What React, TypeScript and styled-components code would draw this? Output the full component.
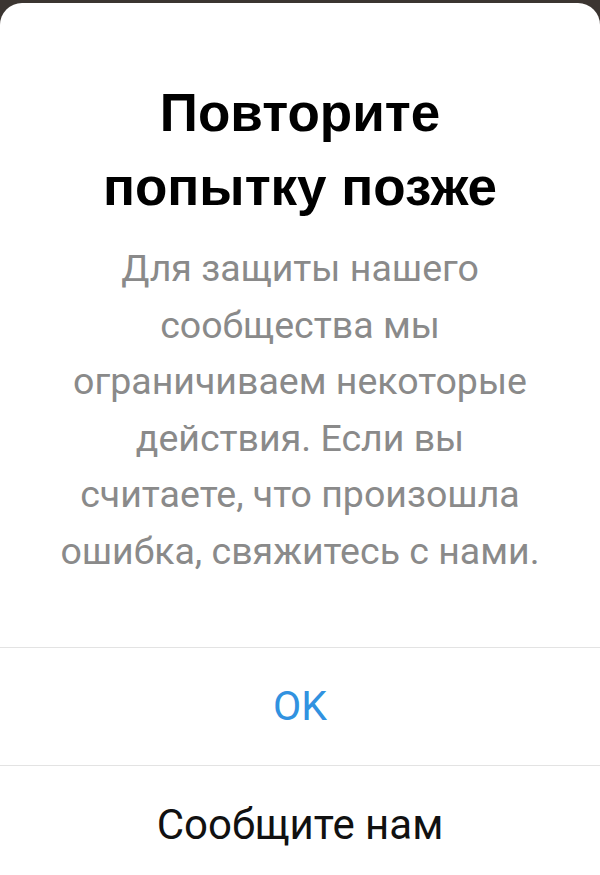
import React from "react";
import styled, { createGlobalStyle } from "styled-components";

const Global = createGlobalStyle`
  html, body { margin: 0; padding: 0; background: #3b3531; }
  #root { min-height: 875px; }
`;

const Backdrop = styled.div`
  width: 600px;
  height: 875px;
  padding-top: 3px;
  box-sizing: border-box;
  background: #3b3531;
  overflow: hidden;
`;

const Card = styled.div`
  background: #ffffff;
  border-radius: 22px 22px 0 0;
  height: 872px;
  display: flex;
  flex-direction: column;
`;

const Header = styled.div`
  padding: 73px 20px 0;
  display: flex;
  flex-direction: column;
  align-items: center;
  text-align: center;
`;

const Title = styled.h1`
  margin: 0;
  font-family: "Liberation Sans", Arial, sans-serif;
  font-weight: 700;
  font-size: 53px;
  line-height: 74px;
  color: #000;
`;

const Message = styled.p`
  margin: 16px 0 0;
  font-family: Roboto, "Noto Sans", sans-serif;
  font-size: 37.5px;
  line-height: 56.6px;
  color: #8a8a8a;
  white-space: nowrap;
`;

const Actions = styled.div`
  margin-top: 67px;
  display: flex;
  flex-direction: column;
`;

const Action = styled.button<{ $primary?: boolean }>`
  height: 118px;
  border: none;
  border-top: 1.5px solid #e3e3e3;
  background: transparent;
  font-family: Roboto, "Noto Sans", sans-serif;
  font-size: ${(p) => (p.$primary ? "41px" : "42px")};
  color: ${(p) => (p.$primary ? "#3192e0" : "#111")};
  padding: 0;
  cursor: pointer;
`;

export default function App() {
  return (
    <>
      <Global />
      <Backdrop>
        <Card>
          <Header>
            <Title>
              Повторите
              <br />
              попытку позже
            </Title>
            <Message>
              Для защиты нашего
              <br />
              сообщества мы
              <br />
              ограничиваем некоторые
              <br />
              действия. Если вы
              <br />
              считаете, что произошла
              <br />
              ошибка, свяжитесь с нами.
            </Message>
          </Header>
          <Actions>
            <Action $primary>OK</Action>
            <Action>Сообщите нам</Action>
          </Actions>
        </Card>
      </Backdrop>
    </>
  );
}
